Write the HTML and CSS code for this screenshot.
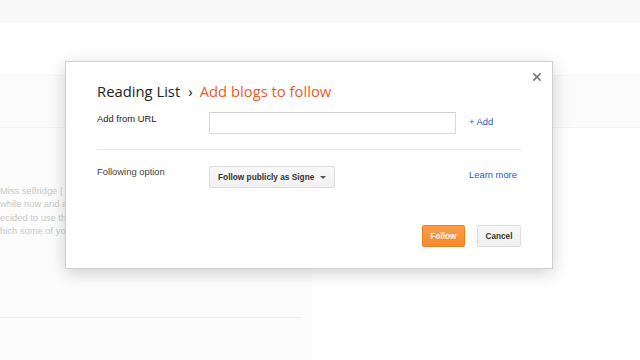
FILE: index.html
```html
<!DOCTYPE html>
<html lang="en">
<head>
  <meta charset="UTF-8" />
  <meta name="viewport" content="width=device-width, initial-scale=1.0"/>
  <title>Reading List</title>
  <link rel="stylesheet" href="styles.css">
</head>
<body>
  <div class="topbar"></div>
  <div class="subheader"></div>
  <div class="tabs"></div>

  <div class="main">
    <div class="posts">
      <div class="post-text">
        <div>Miss selfridge | Spring wishlist and more</div>
        <div>while now and am finally back with</div>
        <div>ecided to use this post to share a few</div>
        <div>hich some of you might like as well</div>
      </div>
      <div class="post-divider"></div>
    </div>
    <div class="sidebar"></div>
  </div>

  <div class="dialog">
    <button class="close" title="Close">
      <svg width="8" height="8" viewBox="0 0 8 8">
        <path d="M1 1 L7 7 M7 1 L1 7" stroke="#7a7a7a" stroke-width="1.7" stroke-linecap="square"/>
      </svg>
    </button>

    <h1 class="dialog-title">Reading List<span class="crumb-sep">›</span><span class="crumb-current">Add blogs to follow</span></h1>

    <div class="field-row">
      <label for="blogUrl" class="field-label">Add from URL</label>
      <input type="text" id="blogUrl" class="url-input" />
      <a href="#" class="link add-link">+ Add</a>
    </div>

    <div class="divider"></div>

    <div class="field-row">
      <span class="field-label option-label">Following option</span>
      <button class="dropdown">Follow publicly as Signe<span class="caret"></span></button>
      <a href="#" class="link learn-link">Learn more</a>
    </div>

    <div class="actions">
      <button class="btn btn-primary">Follow</button>
      <button class="btn">Cancel</button>
    </div>
  </div>
</body>
</html>
```

FILE: styles.css
```css
body {
  font-family: "Liberation Sans", Arial, sans-serif;
  background-color: #fff;
  color: #222;
  margin: 0;
  padding: 0;
  overflow: hidden;
}
.topbar {
  height: 23px;
  background-color: #f9f9f9;
}
.subheader {
  height: 52px;
  background-color: #fff;
}
.tabs {
  height: 51px;
  background-color: #fbfbfb;
  border-top: 1px solid #f4f4f4;
  border-bottom: 1px solid #f1f1f1;
}
.main {
  display: flex;
  height: 232px;
}
.posts {
  width: 312px;
  background-color: #fcfcfc;
  padding-top: 56px;
  box-sizing: border-box;
}
.post-text {
  font-size: 9.4px;
  line-height: 13.4px;
  color: #c8c8c8;
  white-space: nowrap;
  overflow: hidden;
}
.post-divider {
  height: 1px;
  margin: 79px 10px 0 0;
  background-color: #efefef;
}
.sidebar {
  flex: 1;
}

/* dialog */
.dialog {
  position: absolute;
  left: 65px;
  top: 61px;
  width: 488px;
  height: 208px;
  box-sizing: border-box;
  padding: 0 31px;
  background-color: #fff;
  border: 1px solid #cfcfcf;
  box-shadow: 0 4px 16px rgba(0, 0, 0, 0.18);
}
.close {
  position: absolute;
  top: 11px;
  right: 11px;
  width: 8px;
  height: 8px;
  padding: 0;
  border: none;
  background: none;
  cursor: pointer;
  display: flex;
}
.dialog-title {
  font-family: "Open Sans", sans-serif;
  font-weight: normal;
  font-size: 14.8px;
  line-height: 20px;
  color: #222;
  margin: 19px 0 11px 0;
  white-space: nowrap;
}
.crumb-sep {
  margin: 0 7px 0 8px;
}
.crumb-current {
  color: #f4581f;
}
.field-row {
  display: grid;
  grid-template-columns: 112px 260px auto;
  align-items: start;
}
.field-label {
  font-size: 9.4px;
  line-height: 12px;
  padding-top: 1px;
  color: #222;
}
.option-label {
  padding-top: 0;
  color: #444;
}
.url-input {
  width: 247px;
  height: 22px;
  box-sizing: border-box;
  margin: 0;
  border: 1px solid #d9d9d9;
  border-top-color: #cfcfcf;
  border-radius: 1px;
  background-color: #fff;
}
.link {
  font-size: 9.4px;
  line-height: 12px;
  color: #2a55cc;
  text-decoration: none;
}
.add-link {
  padding-top: 4px;
}
.learn-link {
  padding-top: 3px;
}
.divider {
  height: 1px;
  background-color: #e5e5e5;
  margin: 15px 0 16px 0;
}
.dropdown {
  width: 126px;
  height: 22px;
  box-sizing: border-box;
  margin: 0;
  padding: 0 8px 0 8px;
  display: flex;
  align-items: center;
  justify-content: space-between;
  font-family: "Liberation Sans", Arial, sans-serif;
  font-weight: bold;
  font-size: 8.3px;
  color: #333;
  background: linear-gradient(#f8f8f8, #f1f1f1);
  border: 1px solid #dcdcdc;
  border-radius: 2px;
  white-space: nowrap;
}
.caret {
  width: 0;
  height: 0;
  border-left: 3px solid transparent;
  border-right: 3px solid transparent;
  border-top: 3px solid #555;
}
.actions {
  display: flex;
  justify-content: flex-end;
  gap: 12px;
  margin-top: 37px;
}
.btn {
  height: 22px;
  width: 44px;
  box-sizing: border-box;
  margin: 0;
  padding: 0;
  font-family: "Liberation Sans", Arial, sans-serif;
  font-weight: bold;
  font-size: 8.2px;
  color: #333;
  background: linear-gradient(#f6f6f6, #f0f0f0);
  border: 1px solid #dcdcdc;
  border-radius: 2px;
  cursor: pointer;
}
.btn-primary {
  width: 43px;
  color: #fff;
  text-shadow: 0 1px 0 rgba(0, 0, 0, 0.1);
  background: linear-gradient(#fa9d4d, #f68a2e);
  border-color: #f27d12;
}
```
